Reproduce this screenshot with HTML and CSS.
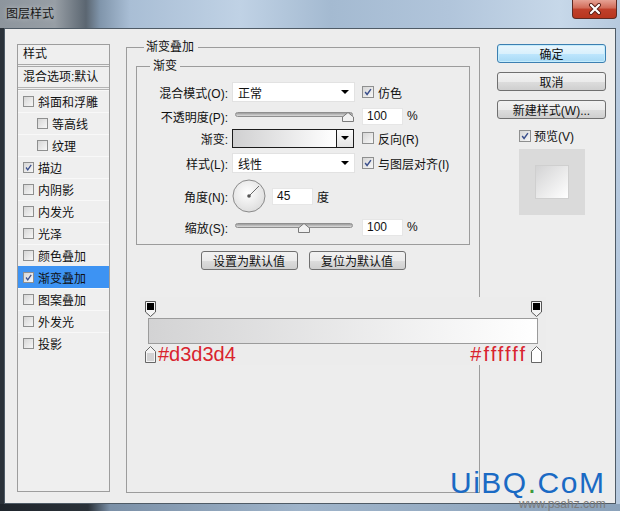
FILE: index.html
```html
<!DOCTYPE html>
<html lang="zh">

<head>
    <meta charset="UTF-8">
    <title>图层样式</title>
    <link rel="stylesheet" href="styles.css">
</head>

<body>
    <div class="window">
        <!-- title bar -->
        <div class="titlebar">
            <span class="title">图层样式</span>
            <span class="close">
                <svg width="14" height="12" viewBox="0 0 14 12">
                    <path d="M3 2 L11 10 M11 2 L3 10" stroke="#5a1e16" stroke-width="4" stroke-linecap="round"/>
                    <path d="M3 2 L11 10 M11 2 L3 10" stroke="#fff" stroke-width="2.2" stroke-linecap="round"/>
                </svg>
            </span>
        </div>

        <div class="client">
            <!-- left list -->
            <div class="side">
                <div class="side-head">样式</div>
                <div class="side-blend">混合选项:默认</div>
                <div class="side-item"><span class="cb"></span>斜面和浮雕</div>
                <div class="side-item sub"><span class="cb"></span>等高线</div>
                <div class="side-item sub"><span class="cb"></span>纹理</div>
                <div class="side-item"><span class="cb"><svg viewBox="0 0 11 11"><path d="M2.5 5.5 L4.6 8.3 L8.8 2.4" fill="none" stroke="#3a4f8c" stroke-width="1.6"/></svg></span>描边</div>
                <div class="side-item"><span class="cb"></span>内阴影</div>
                <div class="side-item"><span class="cb"></span>内发光</div>
                <div class="side-item"><span class="cb"></span>光泽</div>
                <div class="side-item"><span class="cb"></span>颜色叠加</div>
                <div class="side-item active"><span class="cb"><svg viewBox="0 0 11 11"><path d="M2.5 5.5 L4.6 8.3 L8.8 2.4" fill="none" stroke="#3a4f8c" stroke-width="1.6"/></svg></span>渐变叠加</div>
                <div class="side-item"><span class="cb"></span>图案叠加</div>
                <div class="side-item"><span class="cb"></span>外发光</div>
                <div class="side-item"><span class="cb"></span>投影</div>
            </div>

            <!-- gradient overlay settings -->
            <fieldset class="main">
                <legend class="main-title">渐变叠加</legend>
                <fieldset class="inner">
                    <legend class="inner-title">渐变</legend>
                    <div class="form">
                        <div class="lbl">混合模式(O):</div>
                        <div class="ctl"><div class="select">正常<i class="caret"></i></div></div>
                        <div class="ext"><span class="cb big"><svg viewBox="0 0 12 12"><path d="M2.6 6 L4.9 9 L9.5 2.6" fill="none" stroke="#3a4f8c" stroke-width="1.7"/></svg></span>仿色</div>

                        <div class="lbl">不透明度(P):</div>
                        <div class="ctl">
                            <div class="slider">
                                <div class="track"></div>
                                <svg class="thumb" style="left:107px" viewBox="0 0 12 10"><path d="M0.5 9.5 V5 L6 0.5 L11.5 5 V9.5 Z" fill="#f1f1f1" stroke="#7a7a7a"/></svg>
                            </div>
                        </div>
                        <div class="ext"><span class="num">100</span>%</div>

                        <div class="lbl">渐变:</div>
                        <div class="ctl">
                            <div class="swatch"><div class="swatch-fill"></div><div class="swatch-btn"><i class="caret"></i></div></div>
                        </div>
                        <div class="ext"><span class="cb big"></span>反向(R)</div>

                        <div class="lbl">样式(L):</div>
                        <div class="ctl"><div class="select">线性<i class="caret"></i></div></div>
                        <div class="ext"><span class="cb big"><svg viewBox="0 0 12 12"><path d="M2.6 6 L4.9 9 L9.5 2.6" fill="none" stroke="#3a4f8c" stroke-width="1.7"/></svg></span>与图层对齐(I)</div>

                        <div class="lbl">角度(N):</div>
                        <div class="ctl angle">
                            <svg class="dial" width="34" height="34" viewBox="0 0 34 34">
                                <defs>
                                    <radialGradient id="dialFill" cx="45%" cy="40%" r="60%">
                                        <stop offset="0" stop-color="#ffffff"/>
                                        <stop offset="1" stop-color="#dedede"/>
                                    </radialGradient>
                                </defs>
                                <circle cx="17" cy="17" r="16" fill="url(#dialFill)" stroke="#8a8a8a"/>
                                <line x1="17" y1="17" x2="27" y2="7" stroke="#6a6a6a" stroke-width="1"/>
                                <circle cx="17" cy="17" r="1.8" fill="#555"/>
                            </svg>
                            <span class="num">45</span>
                            <span class="unit">度</span>
                        </div>
                        <div></div>

                        <div class="lbl">缩放(S):</div>
                        <div class="ctl">
                            <div class="slider">
                                <div class="track"></div>
                                <svg class="thumb" style="left:63px" viewBox="0 0 12 10"><path d="M0.5 9.5 V5 L6 0.5 L11.5 5 V9.5 Z" fill="#f1f1f1" stroke="#7a7a7a"/></svg>
                            </div>
                        </div>
                        <div class="ext"><span class="num">100</span>%</div>
                    </div>
                </fieldset>
                <div class="defaults">
                    <button class="btn">设置为默认值</button>
                    <button class="btn">复位为默认值</button>
                </div>
            </fieldset>

            <!-- right buttons -->
            <div class="actions">
                <button class="btn primary">确定</button>
                <button class="btn">取消</button>
                <button class="btn">新建样式(W)...</button>
                <div class="preview-check"><span class="cb big"><svg viewBox="0 0 12 12"><path d="M2.6 6 L4.9 9 L9.5 2.6" fill="none" stroke="#3a4f8c" stroke-width="1.7"/></svg></span>预览(V)</div>
                <div class="preview"><div class="preview-square"></div></div>
            </div>
        </div>
        <div class="bottom-frame"></div>

        <!-- annotation laid over the dialog -->
        <div class="annot">
            <div class="stops-top">
                <svg width="11" height="16" viewBox="0 0 11 16"><path d="M0.5 0.5 H10.5 V11 L5.5 15.5 L0.5 11 Z" fill="#f4f4f4" stroke="#555"/><rect x="2" y="2" width="7" height="7" fill="#000"/></svg>
                <svg width="11" height="16" viewBox="0 0 11 16"><path d="M0.5 0.5 H10.5 V11 L5.5 15.5 L0.5 11 Z" fill="#f4f4f4" stroke="#555"/><rect x="2" y="2" width="7" height="7" fill="#000"/></svg>
            </div>
            <div class="bar"></div>
            <div class="stops-bottom">
                <svg width="11" height="17" viewBox="0 0 11 17"><path d="M0.5 16.5 V5.5 L5.5 0.5 L10.5 5.5 V16.5 Z" fill="#f4f4f4" stroke="#666"/><rect x="2" y="7" width="7" height="8" fill="#d3d3d4"/></svg>
                <span class="hex">#d3d3d4</span>
                <span class="hex hex-w">#ffffff</span>
                <svg width="11" height="17" viewBox="0 0 11 17"><path d="M0.5 16.5 V5.5 L5.5 0.5 L10.5 5.5 V16.5 Z" fill="#ffffff" stroke="#666"/></svg>
            </div>
        </div>

        <div class="mark">
            <div class="mark-big">UiBQ<span class="mark-dot">.</span>CoM</div>
            <div class="mark-small">www.psahz.com</div>
        </div>
    </div>
</body>

</html>
```

FILE: styles.css
```css
* {
    box-sizing: border-box;
}

body {
    margin: 0;
    font-family: "Liberation Sans", "Noto Sans CJK SC", sans-serif;
    font-size: 12px;
    color: #111;
}

.window {
    position: relative;
    width: 620px;
    height: 511px;
    overflow: hidden;
    background:
        linear-gradient(#2b323a, #2b323a) 0 28px / 4px 476px no-repeat,
        linear-gradient(90deg, #8d959d 0, #979ea5 55px, #5b6671 86px, #8095ab 100px, #a9bed5 130px, #c0d2e5 240px, #a4bad1 330px, #b1c5db 450px, #c7d8e9 560px, #b6c9de 620px);
}

.titlebar {
    height: 28px;
    display: flex;
    justify-content: space-between;
    align-items: flex-start;
}

.title {
    margin: 8px 0 0 6px;
    line-height: 13px;
    color: #151515;
    text-shadow: 0 0 5px rgba(255, 255, 255, .5);
}

.close {
    width: 45px;
    height: 19px;
    margin-right: 3px;
    border: 1px solid #5d2a23;
    border-top: none;
    border-radius: 0 0 4px 4px;
    background: linear-gradient(#e6a294, #d16a57 45%, #c0402b 50%, #b8361f);
    display: flex;
    align-items: center;
    justify-content: center;
}

.client {
    margin: 0 4px;
    height: 476px;
    border: 1px solid #4f5b66;
    background: #ededed;
    display: flex;
    align-items: flex-start;
    padding: 11px 0 0 12px;
}

.bottom-frame {
    height: 7px;
    background: linear-gradient(90deg, #1f252c 0, #2a3138 88px, #7b90a7 110px, #9fb4ca 300px, #8ba2ba 620px);
}

/* left list */
.side {
    width: 93px;
    height: 448px;
    margin-top: 4px;
    border: 1px solid #9d9d9d;
    background: #efefef;
}

.side-head {
    height: 22px;
    line-height: 18px;
    padding-left: 5px;
    border-bottom: 3px double #a9a9a9;
}

.side-blend {
    height: 23px;
    line-height: 20px;
    padding-left: 5px;
    border-bottom: 3px double #b4b4b4;
}

.side-item {
    height: 22px;
    display: flex;
    align-items: center;
    gap: 4px;
    padding-left: 5px;
    border-top: 1px solid #f8f8f8;
}

.side-item.sub {
    padding-left: 19px;
}

.side-item.active {
    background: #3d93f3;
    border-top-color: #3d93f3;
}

.cb {
    width: 11px;
    height: 11px;
    border: 1px solid #8e8f8f;
    background: linear-gradient(135deg, #d6d6d6, #f7f7f7);
    display: inline-flex;
}

.cb.big {
    width: 12px;
    height: 12px;
}

.cb svg {
    width: 100%;
    height: 100%;
}

/* group boxes */
fieldset {
    margin: 0;
    padding: 0;
    border: 1px solid #9c9c9c;
    min-width: 0;
}

legend {
    line-height: 14px;
}

.main {
    width: 354px;
    height: 453px;
    margin-left: 16px;
    padding: 0 9px;
}

.main-title {
    margin-left: 8px;
    padding: 0 4px 0 2px;
}

.inner {
    width: 334px;
    height: 186px;
    margin-top: 5px;
}

.inner-title {
    margin-left: 13px;
    padding: 0 3px;
}

.form {
    display: grid;
    grid-template-columns: 91px 127px 1fr;
    grid-template-rows: 22px 26px 18px 32px 34px 28px;
    align-items: center;
    padding-top: 8px;
}

.lbl {
    text-align: right;
}

.ctl {
    margin-left: 4px;
    width: 123px;
}

.ext {
    margin-left: 7px;
    display: flex;
    align-items: center;
    gap: 4px;
}

.select {
    height: 20px;
    background: #fff;
    border: 1px solid #e2e2e2;
    display: flex;
    align-items: center;
    justify-content: space-between;
    padding: 0 5px 0 5px;
}

.caret {
    width: 0;
    height: 0;
    border-left: 4px solid transparent;
    border-right: 4px solid transparent;
    border-top: 4px solid #000;
}

.swatch {
    width: 122px;
    height: 19px;
    display: flex;
    border: 1px solid #1c1c1c;
}

.swatch-fill {
    flex: 1;
    background: linear-gradient(90deg, #d0d0d1, #fff);
    border-right: 1px solid #1c1c1c;
}

.swatch-btn {
    width: 16px;
    background: linear-gradient(#fbfbfb, #e4e4e4);
    display: flex;
    align-items: center;
    justify-content: center;
}

.slider {
    position: relative;
    width: 118px;
    height: 10px;
    margin: 2px 0 0 3px;
}

.track {
    height: 5px;
    border: 1px solid #8f8f8f;
    border-radius: 3px;
    background: linear-gradient(#9c9c9c, #dcdcdc);
}

.thumb {
    position: absolute;
    top: 0;
    width: 12px;
    height: 10px;
}

.num {
    width: 41px;
    height: 17px;
    background: #fff;
    border: 1px solid #e6e6e6;
    padding-left: 4px;
    line-height: 15px;
}

.angle {
    display: flex;
    align-items: center;
}

.dial {
    display: block;
}

.angle .num {
    margin-left: 6px;
}

.unit {
    margin-left: 4px;
}

/* buttons */
.btn {
    height: 19px;
    padding: 0;
    font: inherit;
    color: #111;
    border: 1px solid #707070;
    border-radius: 3px;
    background: linear-gradient(#f2f2f2, #ebebeb 50%, #dddddd 51%, #cfcfcf);
}

.defaults {
    display: flex;
    justify-content: center;
    gap: 11px;
    margin-top: 6px;
}

.defaults .btn {
    width: 97px;
}

.actions {
    width: 109px;
    margin: 4px 0 0 17px;
    display: flex;
    flex-direction: column;
}

.actions .btn {
    width: 109px;
    margin-bottom: 9px;
}

.btn.primary {
    border-color: #3c7fb1;
    background: linear-gradient(#eaf6fd, #d9f0fc 50%, #bee6fd 51%, #a7d9f5);
    box-shadow: inset 0 0 0 1px #c4ecfc;
}

.preview-check {
    display: flex;
    align-items: center;
    gap: 3px;
    margin: 1px 0 0 22px;
    height: 13px;
}

.preview {
    width: 66px;
    height: 66px;
    margin: 7px 0 0 22px;
    background: #dadada;
    display: flex;
    align-items: center;
    justify-content: center;
}

.preview-square {
    width: 34px;
    height: 34px;
    border: 1px solid #cfcfcf;
    background: linear-gradient(135deg, #d3d3d4, #fff);
}

/* annotation */
.annot {
    position: absolute;
    left: 140px;
    top: 297px;
    width: 406px;
    height: 68px;
    background: #ececec;
    padding: 4px 4px 0 5px;
}

.stops-top {
    display: flex;
    justify-content: space-between;
    height: 16px;
}

.stops-top svg,
.stops-bottom svg {
    display: block;
}

.bar {
    width: 390px;
    height: 26px;
    margin: 1px 0 0 3px;
    border: 1px solid #9b9b9b;
    background: linear-gradient(90deg, #d3d3d4, #fff);
}

.stops-bottom {
    display: flex;
    align-items: center;
    margin-top: 2px;
}

.hex {
    font-size: 20px;
    line-height: 17px;
    color: #d9232e;
    margin-left: 2px;
}

.hex-w {
    margin-left: auto;
    margin-right: 4px;
    letter-spacing: 2px;
}

/* watermark */
.mark {
    position: absolute;
    left: 450px;
    top: 471px;
}

.mark-big {
    font-size: 30px;
    line-height: 24px;
    letter-spacing: 1.5px;
    color: #1a6ac4;
}

.mark-dot {
    color: #3c9a3c;
}

.mark-small {
    margin: 5px 0 0 69px;
    font-size: 12px;
    line-height: 9px;
    color: #7a7a7a;
}
```
